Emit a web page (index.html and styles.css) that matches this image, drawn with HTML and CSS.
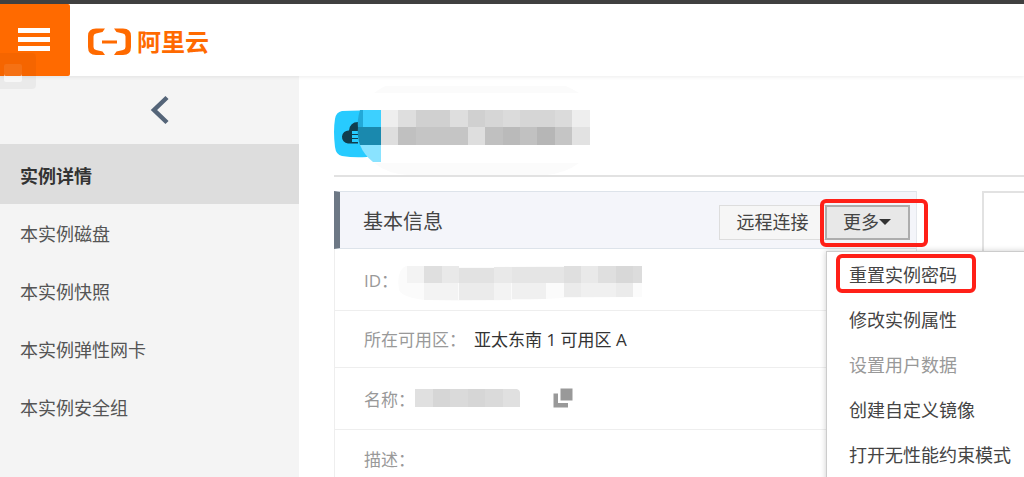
FILE: index.html
```html
<!DOCTYPE html>
<html lang="zh-CN">
<head>
    <meta charset="UTF-8">
    <meta name="viewport" content="width=device-width, initial-scale=1.0">
    <title>实例详情</title>
    <link rel="stylesheet" href="styles.css">
</head>
<body>
    <header class="topbar">
        <button class="menu-button" type="button" aria-label="菜单">
            <span class="bar"></span>
            <span class="bar"></span>
            <span class="bar"></span>
        </button>
        <a class="logo" href="#">
            <svg width="44" height="28" viewBox="0 0 44 28" aria-hidden="true">
                <path fill="#ff6a00" d="M17 0.500H8Q0 0.500 0 8V19Q0 27 8 27H17L14.500 23.500L8 22Q5.500 21.300 5.500 19V8.500Q5.500 6 8 5.500L14.500 4ZM26 0.500H35Q43 0.500 43 8V19Q43 27 35 27H26L28.500 23.500L35 22Q37.500 21.300 37.500 19V8.500Q37.500 6 35 5.500L28.500 4ZM14 12.500H29V15.500H14Z"/>
            </svg>
            <span>阿里云</span>
        </a>
        <span class="ghost"></span>
    </header>

    <div class="layout">
        <nav class="sidebar">
            <button class="back" type="button" aria-label="返回">
                <svg width="20" height="30" viewBox="0 0 20 30" aria-hidden="true">
                    <path d="M17 2.500L4 15L17 27.500" fill="none" stroke="#546478" stroke-width="4.500"/>
                </svg>
            </button>
            <a class="nav-item active" href="#">实例详情</a>
            <a class="nav-item" href="#">本实例磁盘</a>
            <a class="nav-item" href="#">本实例快照</a>
            <a class="nav-item" href="#">本实例弹性网卡</a>
            <a class="nav-item" href="#">本实例安全组</a>
        </nav>

        <main class="content">
            <div class="title">
                <svg width="258" height="89" viewBox="0 0 258 89" aria-hidden="true">
                    <path fill="#fbfbfb" d="M40 7Q54 -4 74 -6H208Q228 -4 245 7ZM40 77H245Q232 87 212 89H74Q54 88 40 77Z"/>
                    <path fill="#27cbff" d="M8 25Q24 24 47 25V59L33 71Q20 72 8 70Q2 69 1 61Q-1 45 1 33Q2 26 8 25Z"/>
                    <path fill="#103d4e" d="M14 57.500A6.500 6.500 0 0 1 15 44.500Q16 36 24 36V57.500Z"/>
                    <path fill="#27cbff" d="M18 45h7v3h-7zM18 49h7v3h-7zM18 53h7v3h-7z"/>
                    <path fill="#22a9d8" d="M26 24H30V42H24Q23 34 26 24Z"/>
                    <path fill="#3dd0ff" d="M29 24H47V42H29Z"/>
                    <path fill="#1a89ae" d="M24 41H47V59H26Q23 50 24 41Z"/>
                    <path fill="#8ae3ff" d="M26 59H47V76H39Q30 69 26 59Z"/>
                    <g shape-rendering="crispEdges">
                        <path fill="#eeeeee" d="M47 24h17v17H47zM238 24h18v17h-18z"/>
                        <path fill="#dedede" d="M64 24h18v17H64zM116 24h18v17h-18zM47 41h17v18H47zM134 41h17v18h-17z"/>
                        <path fill="#d0d0d0" d="M82 24h34v17H82zM134 24h17v17h-17z"/>
                        <path fill="#d6d6d6" d="M151 24h70v17h-70z"/>
                        <path fill="#dbdbdb" d="M169 24h17v17h-17zM221 24h17v17h-17z"/>
                        <path fill="#c0c0c0" d="M64 41h18v18H64zM151 41h18v18h-18z"/>
                        <path fill="#c5c5c5" d="M82 41h52v18H82zM221 41h17v18h-17z"/>
                        <path fill="#bababa" d="M169 41h17v18h-17z"/>
                        <path fill="#c1c1c1" d="M186 41h17v18h-17z"/>
                        <path fill="#b6b6b6" d="M203 41h18v18h-18z"/>
                        <path fill="#e2e2e2" d="M238 41h18v18h-18z"/>
                    </g>
                </svg>
            </div>

            <div class="panels">
                <section class="panel">
                    <div class="panel-head">
                        <h2>基本信息</h2>
                        <button class="btn btn-connect" type="button">远程连接</button>
                        <div class="dropdown">
                            <button class="btn btn-more" type="button">更多<span class="caret"></span></button>
                            <div class="mark mark-more"></div>
                            <div class="menu">
                                <a class="menu-item" href="#">重置实例密码</a>
                                <a class="menu-item" href="#">修改实例属性</a>
                                <a class="menu-item disabled" href="#">设置用户数据</a>
                                <a class="menu-item" href="#">创建自定义镜像</a>
                                <a class="menu-item" href="#">打开无性能约束模式</a>
                                <div class="mark mark-reset"></div>
                            </div>
                        </div>
                    </div>
                    <dl class="info">
                        <div class="row row-id">
                            <dt>ID：</dt>
                            <dd>
                                <svg width="246" height="36" viewBox="0 0 246 36" aria-hidden="true">
                                    <path fill="#fbfbfb" d="M9 0H35L60 1H90L150 0H245V31L165 32L130 34L60 35L30 34Q6 32 2 24Q-1 4 9 0Z"/>
                                    <g shape-rendering="crispEdges">
                                        <path fill="#f3f3f3" d="M0 5h0zM0 0zM10 0h17v17H10zM27 17h34v17H27zM97 17h17v17H97zM184 17h18v14h-18z"/>
                                        <path fill="#dfdfdf" d="M27 0h18v17H27zM167 0h17v17h-17zM201 0h18v17h-18z"/>
                                        <path fill="#e9e9e9" d="M45 0h17v17H45zM97 1h18v16H97zM184 0h17v17h-17z"/>
                                        <path fill="#e2e2e2" d="M62 2h35v15H62z"/>
                                        <path fill="#e5e5e5" d="M115 1h52v16h-52z"/>
                                        <path fill="#d8d8d8" d="M219 0h17v17h-17z"/>
                                        <path fill="#dcdcdc" d="M236 0h9v17h-9z"/>
                                        <path fill="#ebebeb" d="M62 17h35v17H62zM167 17h17v14h-17zM219 17h17v14h-17z"/>
                                        <path fill="#f0f0f0" d="M115 17h34v16h-34zM184 17h35v14h-35z"/>
                                    </g>
                                </svg>
                            </dd>
                        </div>
                        <div class="row row-zone">
                            <dt>所在可用区：</dt>
                            <dd>亚太东南 1 可用区 A</dd>
                        </div>
                        <div class="row row-name">
                            <dt>名称：</dt>
                            <dd>
                                <svg width="106" height="18" viewBox="0 0 106 18" aria-hidden="true">
                                    <path fill="#e0e0e0" d="M0 0H102Q105 1 105 4V18H0Z"/>
                                    <path fill="#d6d6d6" d="M18 0h17v18H18zM53 0h17v18H53z"/>
                                    <path fill="#dadada" d="M35 0h18v18H35zM70 0h18v18H70z"/>
                                </svg>
                                <button class="copy" type="button" aria-label="复制">
                                    <svg width="20" height="20" viewBox="0 0 20 20" aria-hidden="true">
                                        <path fill="#999999" d="M7.500 0.500H19.500V12.500H7.500ZM0.500 5.500H5V15H15V19.500H0.500Z"/>
                                    </svg>
                                </button>
                            </dd>
                        </div>
                        <div class="row row-desc">
                            <dt>描述：</dt>
                            <dd></dd>
                        </div>
                    </dl>
                </section>
                <section class="panel-side"></section>
            </div>
        </main>
    </div>
</body>
</html>
```

FILE: styles.css
```css
* {
    box-sizing: border-box;
}
body {
    margin: 0;
    min-height: 100vh;
    display: flex;
    flex-direction: column;
    overflow: hidden;
    background: #fff;
    color: #444;
    font-family: "Open Sans", "Noto Sans CJK SC", sans-serif;
    font-size: 18px;
    line-height: 24px;
}
button {
    font: inherit;
    color: inherit;
    cursor: pointer;
}
a {
    color: inherit;
    text-decoration: none;
}
.topbar {
    position: relative;
    z-index: 2;
    display: flex;
    align-items: center;
    height: 76px;
    border-top: 4px solid #404040;
    background: #fff;
    box-shadow: 0 1px 4px rgba(0, 0, 0, 0.08);
}
.menu-button {
    display: flex;
    flex-direction: column;
    justify-content: center;
    align-items: center;
    gap: 4px;
    width: 70px;
    height: 72px;
    padding: 0 2px 2px 0;
    border: 0;
    border-radius: 0 2px 2px 0;
    background: #ff6a00;
}
.bar {
    width: 32px;
    height: 5px;
    background: #fff;
}
.logo {
    display: flex;
    align-items: center;
    gap: 5px;
    margin-left: 18px;
    padding-top: 4px;
    color: #ff6a00;
    font-size: 24px;
    font-weight: 700;
}
/* faint square floating over the corner */
.ghost {
    position: absolute;
    left: 0;
    top: 49px;
    width: 36px;
    height: 36px;
    border-radius: 0 4px 4px 0;
    background: rgba(0, 0, 0, 0.04);
}
.ghost::after {
    content: "";
    position: absolute;
    left: 4px;
    top: 11px;
    width: 18px;
    height: 18px;
    border-radius: 2px;
    background: rgba(255, 255, 255, 0.08);
    box-shadow: inset 0 -6px 0 rgba(255, 255, 255, 0.6);
}
.layout {
    flex: 1;
    display: flex;
}
.sidebar {
    flex: 0 0 299px;
    display: flex;
    flex-direction: column;
    background: #f4f4f4;
    color: #555;
}
.back {
    display: flex;
    justify-content: center;
    align-items: center;
    height: 68px;
    padding: 0 0 0 20px;
    border: 0;
    background: none;
}
.nav-item {
    height: 58px;
    padding: 18px 20px;
}
.nav-item.active {
    height: 60px;
    padding: 20px;
    background: #ddd;
    color: #333;
    font-weight: 700;
}
.content {
    flex: 1;
    min-width: 0;
    padding-left: 35px;
}
.title {
    height: 101px;
    padding-top: 10px;
    border-bottom: 2px solid #e2e2e2;
}
.title svg {
    display: block;
}
.panels {
    display: flex;
    gap: 65px;
    margin-top: 14px;
}
.panel {
    flex: 1;
    border-right: 1px solid #e4e7ec;
}
.panel-side {
    flex: 0 0 42px;
    border: 2px solid #e2e2e2;
    border-width: 2px 0 0 2px;
}
.panel-head {
    display: flex;
    align-items: center;
    height: 58px;
    padding: 4px 6px 0 23px;
    border: 1px solid #dde3ea;
    border-width: 1px 0;
    border-left: 6px solid #6d7885;
    background: #f4f5fa;
}
.panel-head h2 {
    flex: 1;
    margin: 0;
    font-size: 20px;
    font-weight: 400;
}
.btn {
    height: 35px;
    padding: 0 16px;
    border: 1px solid #ddd;
    background: #f6f6f6;
    white-space: nowrap;
}
.btn-connect {
    width: 106px;
    border-right: 0;
}
.dropdown {
    position: relative;
}
.btn-more {
    display: flex;
    align-items: center;
    width: 85px;
    border: 2px solid #adadad;
    background: #e8e8e8;
}
.caret {
    border: 6px solid transparent;
    border-top-color: #333;
    border-bottom: 0;
}
.mark {
    position: absolute;
    border: 4px solid #ff2018;
    border-radius: 6px;
    pointer-events: none;
}
.mark-more {
    left: -5px;
    top: -6px;
    width: 108px;
    height: 48px;
}
.menu {
    position: absolute;
    left: 1px;
    top: 46px;
    z-index: 1;
    width: 220px;
    padding: 1px 0 20px;
    border: 1px solid #ccc;
    background: #fff;
    box-shadow: 0 0 6px rgba(0, 0, 0, 0.2);
}
.mark-reset {
    left: 9px;
    top: 2px;
    width: 140px;
    height: 39px;
}
.menu-item {
    display: block;
    height: 45px;
    padding: 10px 22px;
    white-space: nowrap;
}
.menu-item.disabled {
    color: #999;
}
.info {
    margin: 0;
    border-left: 1px solid #eee;
    font-size: 17px;
}
.row {
    display: flex;
    align-items: center;
    padding: 2px 0 0 29px;
    border-bottom: 1px solid #eee;
}
.row dt {
    color: #999;
}
.row dd {
    display: flex;
    align-items: center;
    margin: 0;
}
.row-id {
    height: 62px;
}
.row-id dd {
    padding-top: 6px;
    margin-left: -1px;
}
.row-zone {
    height: 57px;
}
.row-zone dd {
    margin-left: 8px;
    color: #333;
}
.row-name {
    height: 62px;
}
.row-name dd {
    padding-bottom: 4px;
}
.row-desc {
    height: 58px;
    border-bottom: 0;
}
.copy {
    display: flex;
    margin-left: 32px;
    padding: 0;
    border: 0;
    background: none;
}
```
